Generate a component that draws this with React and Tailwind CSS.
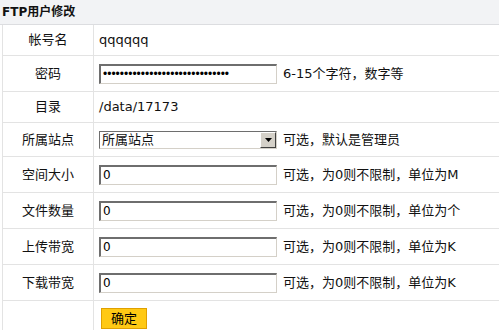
const FONT = "font-['DejaVu_Sans','Noto_Sans_CJK_SC',sans-serif]";

const inputCls =
  "w-[178px] h-[20px] px-[2px] text-[12px] text-black bg-white outline-none border-t-2 border-l-2 border-r border-b border-t-[#6e6e6e] border-l-[#6e6e6e] border-r-[#d4d0c8] border-b-[#d4d0c8] " +
  FONT;

const Row = ({ label, h, children }) => (
  <div className={`flex border-b border-[#e3e3e3] ${h}`}>
    <div className="w-[91px] shrink-0 border-r border-[#e3e3e3] flex items-center justify-center text-[13px] text-[#111]">
      {label}
    </div>
    <div className="flex-1 flex items-center pl-[5px] text-[13px] text-[#111]">
      {children}
    </div>
  </div>
);

const Hint = ({ children }) => <span className="ml-[6px] whitespace-nowrap">{children}</span>;

const App = () => {
  const limits = [
    { label: "空间大小", hint: "可选，为0则不限制，单位为M" },
    { label: "文件数量", hint: "可选，为0则不限制，单位为个" },
    { label: "上传带宽", hint: "可选，为0则不限制，单位为K" },
    { label: "下载带宽", hint: "可选，为0则不限制，单位为K" },
  ];

  return (
    <div className={`w-[499px] h-[330px] bg-white overflow-hidden ${FONT}`}>
      <div className="h-[25px] bg-[#f2f3f5] border-b border-[#dcdde0] flex items-center pl-[2px] text-[12px] font-bold text-[#111]">
        FTP用户修改
      </div>
      <div className="ml-[2px] border-l border-[#e3e3e3]">
        <Row label="帐号名" h="h-[31px]">
          <span>qqqqqq</span>
        </Row>
        <Row label="密码" h="h-[36px]">
          <input
            type="password"
            readOnly
            value="qqqqqqqqqqqqqqqqqqqqqqqqqqqqqq"
            className={inputCls + " !font-['Liberation_Sans',sans-serif] tracking-[0px]"}
          />
          <Hint>6-15个字符，数字等</Hint>
        </Row>
        <Row label="目录" h="h-[31px]">
          <span>/data/17173</span>
        </Row>
        <Row label="所属站点" h="h-[34px]">
          <div className="relative w-[178px] h-[18px] flex items-center bg-white border-t border-l border-[#6e6e6e] border-r border-b border-r-[#d4d0c8] border-b-[#d4d0c8]">
            <span className="pl-[2px] text-[13px] leading-none">所属站点</span>
            <span className="absolute right-0 top-0 w-[16px] h-[16px] bg-[#d4d0c8] border-t border-l border-white border-r border-b border-r-[#404040] border-b-[#404040] flex items-center justify-center">
              <svg width="7" height="4" viewBox="0 0 7 4">
                <path d="M0 0h7L3.5 4z" fill="#000" />
              </svg>
            </span>
          </div>
          <Hint>可选，默认是管理员</Hint>
        </Row>
        {limits.map((item) => (
          <Row key={item.label} label={item.label} h="h-[36px]">
            <input type="text" readOnly value="0" className={inputCls} />
            <Hint>{item.hint}</Hint>
          </Row>
        ))}
        <div className="flex h-[30px]">
          <div className="w-[91px] shrink-0 border-r border-[#e3e3e3]" />
          <div className="flex-1 pl-[7px] pt-[5px]">
            <button className="w-[46px] h-[21px] bg-[#ffc914] border border-[#e0a000] text-[13px] text-black leading-none">
              确定
            </button>
          </div>
        </div>
      </div>
    </div>
  );
};

export default App;
